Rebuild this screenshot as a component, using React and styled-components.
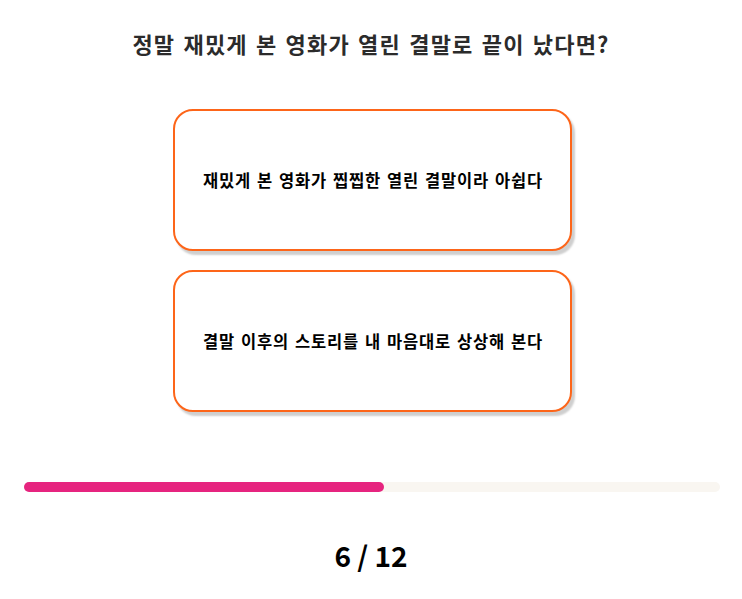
import styled, { createGlobalStyle } from "styled-components";

const GlobalStyle = createGlobalStyle`
  body {
    margin: 0;
    background: #fff;
    font-family: "Noto Sans CJK KR", "Noto Sans", sans-serif;
  }
`;

const Page = styled.div`
  display: flex;
  flex-direction: column;
  align-items: center;
  padding-top: 28px;
`;

const Question = styled.h1`
  margin: 0 0 51px;
  font-size: 22px;
  line-height: 30px;
  font-weight: 700;
  letter-spacing: 1.2px;
  word-spacing: 2px;
  color: #2b2b2b;
`;

const Answers = styled.div`
  display: flex;
  flex-direction: column;
  gap: 19px;
  padding-left: 2px;
`;

const Answer = styled.button`
  width: 399px;
  height: 142px;
  box-sizing: border-box;
  display: flex;
  align-items: center;
  justify-content: center;
  background: #fff;
  border: 2px solid #fd6519;
  border-radius: 20px;
  box-shadow: 3px 4px 2px #cfcfcf;
  font-family: inherit;
  font-size: 16.5px;
  font-weight: 700;
  letter-spacing: 0.8px;
  word-spacing: 1.5px;
  color: #000;
  cursor: pointer;
  padding: 0 0 0 2px;
`;

const Track = styled.div`
  align-self: stretch;
  margin: 70px 22px 0 24px;
  height: 10px;
  border-radius: 5px;
  background: #f9f6f1;
`;

const Fill = styled.div`
  height: 100%;
  border-radius: 5px;
  background: #e6247f;
`;

const Counter = styled.div`
  margin-top: 45px;
  font-size: 28px;
  line-height: 36px;
  font-weight: 700;
  color: #000;
`;

const answers = [
  "재밌게 본 영화가 찝찝한 열린 결말이라 아쉽다",
  "결말 이후의 스토리를 내 마음대로 상상해 본다",
];

const App = () => {
  const current = 6;
  const total = 12;
  return (
    <>
      <GlobalStyle />
      <Page>
        <Question>정말 재밌게 본 영화가 열린 결말로 끝이 났다면?</Question>
        <Answers>
          {answers.map((a) => (
            <Answer key={a}>{a}</Answer>
          ))}
        </Answers>
        <Track>
          <Fill style={{ width: `${(current / total) * 100 + 1.7}%` }} />
        </Track>
        <Counter>
          {current} / {total}
        </Counter>
      </Page>
    </>
  );
};

export default App;
